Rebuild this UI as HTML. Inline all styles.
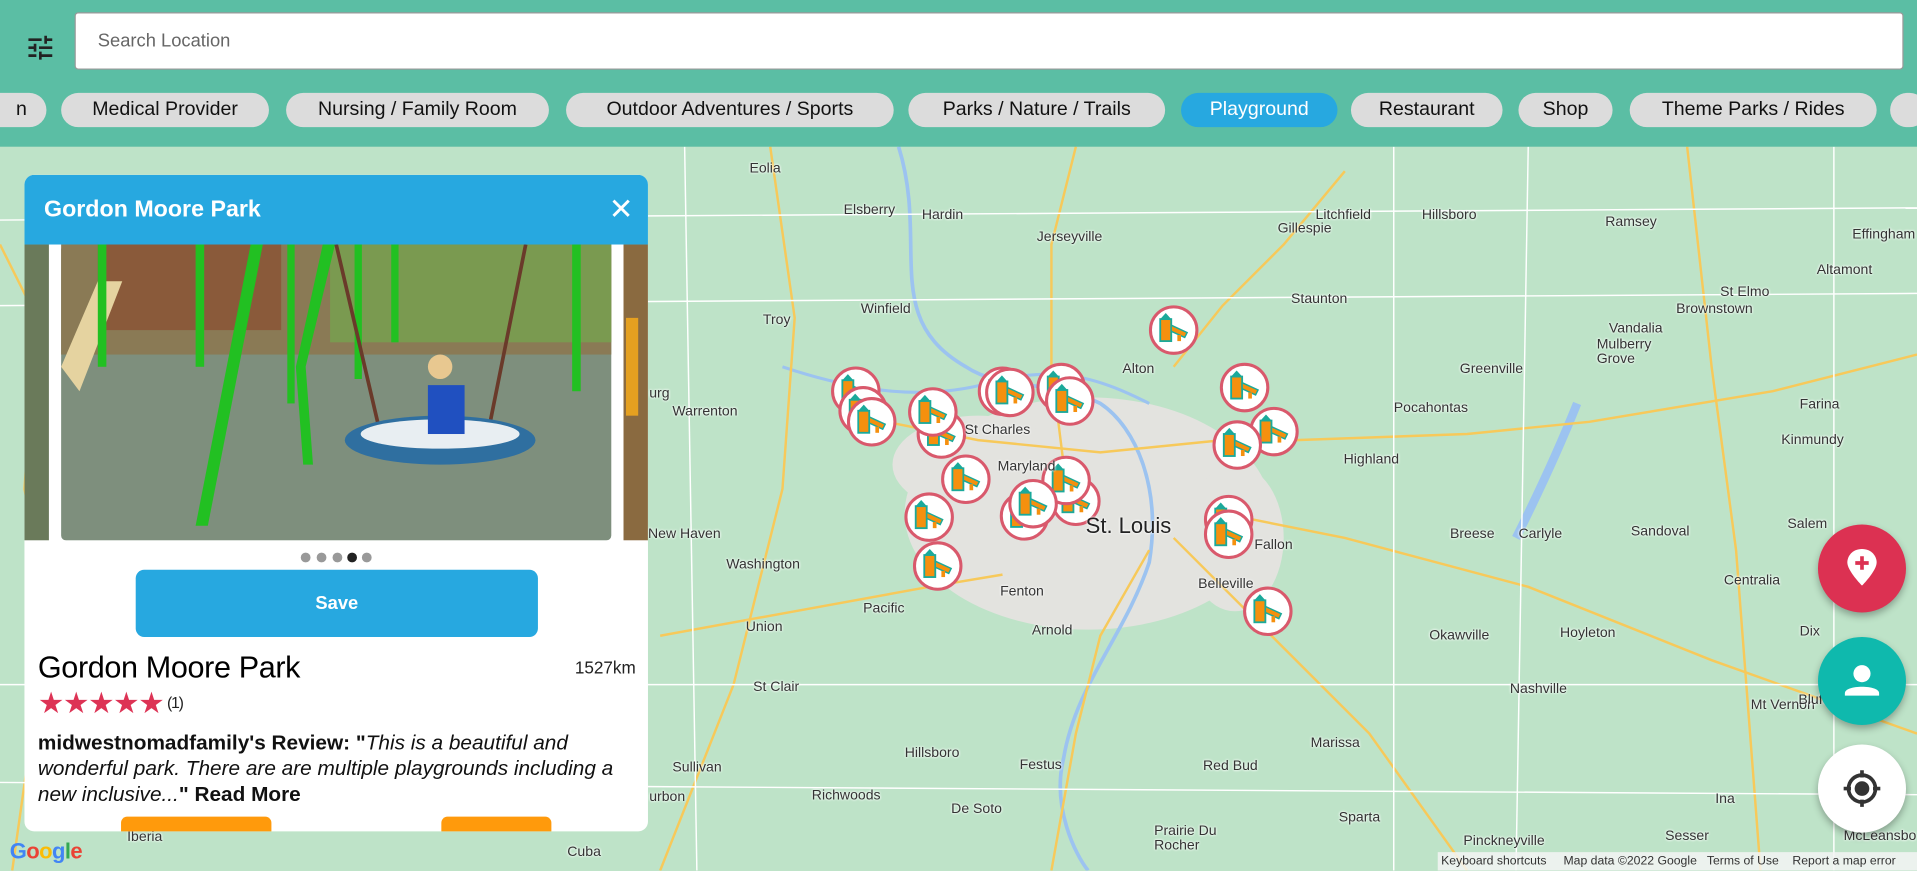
<!DOCTYPE html>
<html><head><meta charset="utf-8">
<style>
html,body{margin:0;padding:0;width:1917px;height:871px;overflow:hidden;background:#bee3c8;font-family:"Liberation Sans",sans-serif}
#s{position:absolute;left:0;top:0;width:1568px;height:712px;transform:scale(1.22258);transform-origin:0 0}
.chip{position:absolute;top:76px;height:28px;border-radius:14px;background:#dcdcdc;color:#111;font-size:16px;line-height:28px;text-align:center;white-space:nowrap;overflow:hidden}
.lbl{position:absolute;font-size:11.5px;color:#333;white-space:nowrap;text-shadow:0 0 2px #fff,0 0 2px #fff}
.fab{position:absolute;width:72px;height:72px;border-radius:50%;box-shadow:0 3px 6px rgba(0,0,0,.3)}
</style></head><body><div id="s">
<svg width="1568" height="712" style="position:absolute;left:0;top:0">
<defs>
<g id="m"><circle r="19" fill="#fff" stroke="#d9596c" stroke-width="2.5"/>
<rect x="-11" y="-9" width="9" height="18" fill="#f5900e" stroke="#1ba99a" stroke-width="1.5"/>
<path d="M-11,-9 L-6.5,-14 L-2,-9Z" fill="#1ba99a"/>
<path d="M-2,-4 L11,2 L9,6 L-2,1Z" fill="#f5900e" stroke="#1ba99a" stroke-width="1.2"/>
<rect x="3" y="4" width="3" height="5" fill="#f5900e"/></g>
</defs>
<ellipse cx="890" cy="420" rx="150" ry="95" fill="#e3e3df"/>
<ellipse cx="800" cy="380" rx="70" ry="40" fill="#e3e3df"/>
<ellipse cx="1010" cy="440" rx="40" ry="60" fill="#e3e3df"/>
<path d="M735,120 C760,200 720,260 790,300 C820,320 860,310 900,330 C930,350 950,400 940,460 C920,520 880,560 870,620 C860,660 880,700 890,712" fill="none" stroke="#9cc3f0" stroke-width="3"/>
<path d="M640,300 C700,320 760,330 820,310 C870,300 900,310 940,330" fill="none" stroke="#9cc3f0" stroke-width="2.5"/>
<path d="M1290,330 C1270,380 1250,420 1240,440" stroke="#9cc3f0" stroke-width="7" fill="none"/>
<g fill="none" stroke="#f7c95a" stroke-width="2">
<path d="M1060,360 L1200,355 L1300,345 L1450,320 L1568,290"/>
<path d="M1000,420 L1100,440 L1250,480 L1400,540 L1568,600"/>
<path d="M940,450 L900,520 L880,600 L860,712"/>
<path d="M820,470 L760,480 L650,500 L540,520"/>
<path d="M700,340 L800,360 L900,370 L1000,360"/>
<path d="M870,380 L860,300 L860,200 L880,120"/>
<path d="M960,300 L1000,250 L1050,200 L1100,140"/>
<path d="M960,440 L1040,520 L1120,600 L1200,712"/>
<path d="M630,120 L650,260 L640,400 L600,560 L540,712"/>
<path d="M1380,120 L1400,300 L1420,450 L1440,712"/>
<path d="M0,200 L30,260 L20,400 L40,500 L10,712"/>
</g>
<g fill="none" stroke="#fff" stroke-width="1.2">
<path d="M0,180 L1568,170"/><path d="M0,250 L1568,240"/><path d="M0,560 L1568,560"/><path d="M0,640 L1568,650"/>
<path d="M1140,120 L1140,712"/><path d="M1250,120 L1240,712"/><path d="M560,120 L570,712"/><path d="M1500,120 L1500,712"/>
</g>
<g>
<use href="#m" x="960" y="270"/><use href="#m" x="700" y="320"/><use href="#m" x="706" y="336"/><use href="#m" x="713" y="345"/>
<use href="#m" x="770" y="355"/><use href="#m" x="763" y="337"/><use href="#m" x="820" y="320"/><use href="#m" x="826" y="321"/>
<use href="#m" x="868" y="317"/><use href="#m" x="875" y="328"/><use href="#m" x="1018" y="317"/><use href="#m" x="1042" y="353"/>
<use href="#m" x="1012" y="364"/><use href="#m" x="790" y="392"/><use href="#m" x="880" y="410"/><use href="#m" x="872" y="393"/>
<use href="#m" x="838" y="422"/><use href="#m" x="845" y="412"/><use href="#m" x="760" y="423"/><use href="#m" x="1005" y="425"/>
<use href="#m" x="1005" y="437"/><use href="#m" x="767" y="463"/><use href="#m" x="1037" y="500"/>
</g>
</svg>
<div class="lbl" style="left:613px;top:132px">Eolia</div><div class="lbl" style="left:690px;top:166px">Elsberry</div>
<div class="lbl" style="left:754px;top:170px">Hardin</div><div class="lbl" style="left:848px;top:188px">Jerseyville</div>
<div class="lbl" style="left:1076px;top:170px">Litchfield</div><div class="lbl" style="left:1163px;top:170px">Hillsboro</div>
<div class="lbl" style="left:1313px;top:176px">Ramsey</div><div class="lbl" style="left:1515px;top:186px">Effingham</div>
<div class="lbl" style="left:1045px;top:181px">Gillespie</div><div class="lbl" style="left:1056px;top:239px">Staunton</div>
<div class="lbl" style="left:1486px;top:215px">Altamont</div><div class="lbl" style="left:1407px;top:233px">St Elmo</div>
<div class="lbl" style="left:1371px;top:247px">Brownstown</div><div class="lbl" style="left:1316px;top:263px">Vandalia</div>
<div class="lbl" style="left:624px;top:256px">Troy</div><div class="lbl" style="left:704px;top:247px">Winfield</div>
<div class="lbl" style="left:1306px;top:276px">Mulberry<br>Grove</div><div class="lbl" style="left:1194px;top:296px">Greenville</div>
<div class="lbl" style="left:918px;top:296px">Alton</div><div class="lbl" style="left:1140px;top:328px">Pocahontas</div>
<div class="lbl" style="left:1472px;top:325px">Farina</div><div class="lbl" style="left:550px;top:331px">Warrenton</div>
<div class="lbl" style="left:789px;top:346px">St Charles</div><div class="lbl" style="left:1099px;top:370px">Highland</div>
<div class="lbl" style="left:1457px;top:354px">Kinmundy</div><div class="lbl" style="left:816px;top:376px">Maryland</div>
<div class="lbl" style="left:530px;top:431px">New Haven</div><div class="lbl" style="left:594px;top:456px">Washington</div>
<div class="lbl" style="left:888px;top:420px;font-size:18px;color:#222">St. Louis</div>
<div class="lbl" style="left:1186px;top:431px">Breese</div><div class="lbl" style="left:1242px;top:431px">Carlyle</div>
<div class="lbl" style="left:1334px;top:429px">Sandoval</div><div class="lbl" style="left:1462px;top:423px">Salem</div>
<div class="lbl" style="left:1026px;top:440px">Fallon</div><div class="lbl" style="left:1410px;top:469px">Centralia</div>
<div class="lbl" style="left:706px;top:492px">Pacific</div><div class="lbl" style="left:818px;top:478px">Fenton</div>
<div class="lbl" style="left:980px;top:472px">Belleville</div><div class="lbl" style="left:610px;top:507px">Union</div>
<div class="lbl" style="left:844px;top:510px">Arnold</div><div class="lbl" style="left:1169px;top:514px">Okawville</div>
<div class="lbl" style="left:1276px;top:512px">Hoyleton</div><div class="lbl" style="left:1472px;top:511px">Dix</div>
<div class="lbl" style="left:616px;top:556px">St Clair</div><div class="lbl" style="left:1235px;top:558px">Nashville</div>
<div class="lbl" style="left:1432px;top:571px">Mt Vernon</div><div class="lbl" style="left:1471px;top:567px">Bluford</div>
<div class="lbl" style="left:550px;top:622px">Sullivan</div><div class="lbl" style="left:740px;top:610px">Hillsboro</div>
<div class="lbl" style="left:834px;top:620px">Festus</div><div class="lbl" style="left:984px;top:621px">Red Bud</div>
<div class="lbl" style="left:1072px;top:602px">Marissa</div><div class="lbl" style="left:664px;top:645px">Richwoods</div>
<div class="lbl" style="left:778px;top:656px">De Soto</div><div class="lbl" style="left:1095px;top:663px">Sparta</div>
<div class="lbl" style="left:1403px;top:648px">Ina</div><div class="lbl" style="left:104px;top:679px">Iberia</div>
<div class="lbl" style="left:464px;top:691px">Cuba</div><div class="lbl" style="left:944px;top:674px;line-height:12px">Prairie Du<br>Rocher</div>
<div class="lbl" style="left:1197px;top:682px">Pinckneyville</div><div class="lbl" style="left:1362px;top:678px">Sesser</div>
<div class="lbl" style="left:1508px;top:678px">McLeansbo</div>
<div class="lbl" style="left:362px;top:159px">Laddonia</div><div class="lbl" style="left:118px;top:173px">Sturgeon</div>
<div class="lbl" style="left:531px;top:316px">urg</div><div class="lbl" style="left:531px;top:646px">urbon</div>

<div style="position:absolute;left:0;top:0;width:1568px;height:120px;background:rgba(80,185,160,.9)"></div>
<svg style="position:absolute;left:20px;top:26px" width="26" height="26" viewBox="0 0 24 24"><path d="M3 17v2h6v-2H3zM3 5v2h10V5H3zm10 16v-2h8v-2h-8v-2h-2v6h2zM7 9v2H3v2h4v2h2V9H7zm14 4v-2H11v2h10zm-6-4h2V7h4V5h-4V3h-2v6z" fill="#222"/></svg>
<div style="position:absolute;left:61px;top:10px;width:1496px;height:47px;background:#fff;border:1px solid #999;border-radius:3px;box-sizing:border-box;font-size:15px;color:#666;line-height:46px;padding-left:18px">Search Location</div>
<div class="chip" style="left:0;width:38px;border-radius:0 14px 14px 0"><span style="position:absolute;right:16px">n</span></div>
<div class="chip" style="left:50px;width:170px">Medical Provider</div>
<div class="chip" style="left:234px;width:215px">Nursing / Family Room</div>
<div class="chip" style="left:463px;width:268px">Outdoor Adventures / Sports</div>
<div class="chip" style="left:743px;width:210px">Parks / Nature / Trails</div>
<div class="chip" style="left:966px;width:128px;background:#27a8e0;color:#fff">Playground</div>
<div class="chip" style="left:1105px;width:124px">Restaurant</div>
<div class="chip" style="left:1242px;width:77px">Shop</div>
<div class="chip" style="left:1333px;width:202px">Theme Parks / Rides</div>
<div class="chip" style="left:1546px;width:30px"></div>

<div style="position:absolute;left:20px;top:143px;width:510px;height:537px;background:#fff;border-radius:8px;overflow:hidden">
<div style="height:57px;background:#27a8e0;color:#fff;font-weight:bold;font-size:19px;line-height:57px;padding-left:16px;position:relative">Gordon Moore Park<span style="position:absolute;right:12px;top:0;font-weight:normal;font-size:24px">✕</span></div>
<svg width="510" height="242" style="display:block">
<rect x="0" y="0" width="20" height="242" fill="#6a7a5a"/><rect x="490" y="0" width="20" height="242" fill="#8a6a40"/><rect x="492" y="60" width="10" height="80" fill="#e5a020"/>
<rect x="30" y="0" width="450" height="242" rx="4" fill="#7e8f7d"/>
<rect x="30" y="0" width="450" height="90" fill="#8a7a55"/>
<rect x="250" y="0" width="230" height="80" fill="#7a9a50"/>
<rect x="60" y="0" width="150" height="70" fill="#8a5a3a"/>
<path d="M30,100 L60,30 L80,30 L45,120Z" fill="#e5d3a0"/>
<g fill="#22c022"><rect x="60" y="0" width="7" height="100"/><rect x="140" y="0" width="7" height="100"/><rect x="215" y="0" width="6" height="130"/><rect x="300" y="0" width="6" height="80"/><rect x="448" y="0" width="7" height="120"/>
<path d="M185,0 L195,0 L150,230 L140,230Z"/><path d="M244,0 L254,0 L230,100 L236,180 L228,180 L222,100Z"/><rect x="270" y="0" width="6" height="110"/></g>
<path d="M255,0 L290,150 M410,0 L380,150" stroke="#6a3a2a" stroke-width="3"/>
<ellipse cx="340" cy="160" rx="78" ry="20" fill="#2f6fa0"/><ellipse cx="340" cy="155" rx="65" ry="12" fill="#e8eef2"/>
<rect x="330" y="115" width="30" height="40" fill="#2050c0"/><circle cx="340" cy="100" r="10" fill="#e8c890"/>
</svg>
<div style="position:absolute;left:226px;top:309px;width:60px;height:8px">
<span style="position:absolute;left:0;width:8px;height:8px;border-radius:50%;background:#999"></span><span style="position:absolute;left:13px;width:8px;height:8px;border-radius:50%;background:#999"></span><span style="position:absolute;left:26px;width:8px;height:8px;border-radius:50%;background:#999"></span><span style="position:absolute;left:38px;width:8px;height:8px;border-radius:50%;background:#222"></span><span style="position:absolute;left:50px;width:8px;height:8px;border-radius:50%;background:#999"></span></div>
<div style="position:absolute;left:91px;top:323px;width:329px;height:55px;background:#27a8e0;border-radius:7px;color:#fff;font-weight:bold;font-size:15px;line-height:55px;text-align:center">Save</div>
<div style="position:absolute;left:11px;top:389px;font-size:25px;color:#000;letter-spacing:-0.3px">Gordon Moore Park</div>
<div style="position:absolute;right:10px;top:395px;font-size:14px;color:#222">1527km</div>
<div style="position:absolute;left:11px;top:418px;font-size:24px;color:#dd3355;letter-spacing:-1px">★★★★★<span style="font-size:13px;color:#222;position:relative;top:-4px;margin-left:3px">(1)</span></div>
<div style="position:absolute;left:11px;top:454px;width:490px;font-size:17px;line-height:21px;color:#111"><b>midwestnomadfamily's Review: "</b><i>This is a beautiful and wonderful park. There are are multiple playgrounds including a new inclusive...</i><b>" Read More</b></div>
<div style="position:absolute;left:79px;top:525px;width:123px;height:20px;background:#ff9a0c;border-radius:5px 5px 0 0"></div>
<div style="position:absolute;left:341px;top:525px;width:90px;height:20px;background:#ff9a0c;border-radius:5px 5px 0 0"></div>
</div>

<div class="fab" style="left:1487px;top:429px;background:#dc3152"><svg width="72" height="72"><path d="M36,20 C28,20 24,26 24,31 C24,38 36,50 36,50 C36,50 48,38 48,31 C48,26 44,20 36,20Z" fill="#fff"/><path d="M36,26 V37 M30.5,31.5 H41.5" stroke="#dc3152" stroke-width="3"/></svg></div>
<div class="fab" style="left:1487px;top:521px;background:#0fb9ad"><svg width="72" height="72"><circle cx="36" cy="30" r="7" fill="#fff"/><path d="M22,46 C22,39 50,39 50,46 V48 H22Z" fill="#fff"/></svg></div>
<div class="fab" style="left:1487px;top:609px;background:#fff"><svg width="72" height="72"><circle cx="36" cy="36" r="11" fill="none" stroke="#333" stroke-width="3"/><circle cx="36" cy="36" r="6" fill="#333"/><path d="M36,21 V27 M36,45 V51 M21,36 H27 M45,36 H51" stroke="#333" stroke-width="3"/></svg></div>

<div style="position:absolute;left:8px;top:686px;font-size:18px;font-weight:bold;letter-spacing:-0.5px"><span style="color:#4285f4">G</span><span style="color:#ea4335">o</span><span style="color:#fbbc05">o</span><span style="color:#4285f4">g</span><span style="color:#34a853">l</span><span style="color:#ea4335">e</span></div>
<div style="position:absolute;left:1176px;top:697px;width:392px;height:15px;background:rgba(245,245,245,.85);font-size:10px;color:#333;line-height:15px;white-space:nowrap">&nbsp;Keyboard shortcuts &nbsp;&nbsp;&nbsp; Map data ©2022 Google &nbsp; Terms of Use &nbsp;&nbsp; Report a map error</div>
</div></body></html>
